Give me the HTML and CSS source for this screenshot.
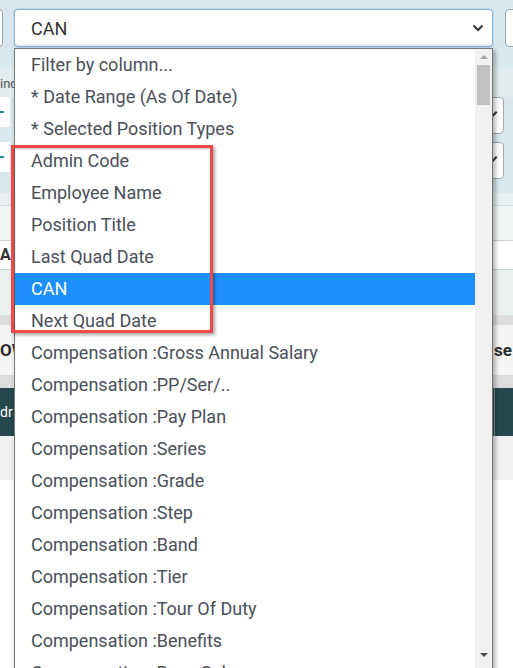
FILE: index.html
```html
<!DOCTYPE html>
<html>
<head>
<meta charset="utf-8">
<link rel="stylesheet" href="styles.css">
</head>
<body>
<div class="page">
  <div class="toolbar">
    <div class="tb-input tb-left"></div>
    <div class="select">
      <span class="select-value">CAN</span>
      <svg class="chev" width="12" height="8" viewBox="0 0 12 8"><path d="M1.5 1.5 L6 6 L10.5 1.5" fill="none" stroke="#333" stroke-width="2"/></svg>
    </div>
    <div class="tb-input tb-right"></div>
  </div>
  <div class="panel">
    <div class="panel-label">ind</div>
    <div class="panel-row">
      <div class="field"><span class="mark"></span></div>
      <div class="btn"><span class="pencil"></span></div>
    </div>
    <div class="panel-row">
      <div class="field"><span class="mark"></span></div>
      <div class="btn"><span class="pencil"></span></div>
    </div>
  </div>
  <div class="sep"></div>
  <div class="band-a"><div class="row-a">As</div></div>
  <div class="band-light"></div>
  <div class="band-grey"></div>
  <div class="band-title"><span class="title-l">OW</span><span class="title-r">se</span></div>
  <div class="band-grey2"></div>
  <div class="thead"><span class="th-l">dr</span><span class="th-div"></span></div>
  <div class="band-lightgrey"></div>
  <div class="band-white"></div>
</div>

<div class="dropdown">
  <div class="options">
    <div class="opt">Filter by column...</div>
    <div class="opt">* Date Range (As Of Date)</div>
    <div class="opt">* Selected Position Types</div>
    <div class="opt">Admin Code</div>
    <div class="opt">Employee Name</div>
    <div class="opt">Position Title</div>
    <div class="opt">Last Quad Date</div>
    <div class="opt active">CAN</div>
    <div class="opt">Next Quad Date</div>
    <div class="opt">Compensation :Gross Annual Salary</div>
    <div class="opt">Compensation :PP/Ser/..</div>
    <div class="opt">Compensation :Pay Plan</div>
    <div class="opt">Compensation :Series</div>
    <div class="opt">Compensation :Grade</div>
    <div class="opt">Compensation :Step</div>
    <div class="opt">Compensation :Band</div>
    <div class="opt">Compensation :Tier</div>
    <div class="opt">Compensation :Tour Of Duty</div>
    <div class="opt">Compensation :Benefits</div>
    <div class="opt">Compensation :Base Salary</div>
  </div>
  <div class="scrollbar">
    <div class="arrow-up"></div>
    <div class="thumb"></div>
    <div class="track"></div>
    <div class="arrow-down"></div>
  </div>
</div>

<div class="annot"></div>
</body>
</html>
```

FILE: styles.css
```css
html, body {
  margin: 0;
  padding: 0;
}
body {
  width: 513px;
  height: 668px;
  overflow: hidden;
  position: relative;
  font-family: Roboto, "Liberation Sans", sans-serif;
  background: #ffffff;
}
.page {
  display: flex;
  flex-direction: column;
}
.toolbar {
  height: 57px;
  background: #d7e7eb;
  display: flex;
  align-items: flex-start;
  padding-top: 9px;
  box-sizing: border-box;
  gap: 11px;
}
.tb-input {
  height: 38px;
  background: #fff;
  border: 1px solid #9aa5a8;
  border-radius: 4px;
  box-sizing: border-box;
  flex: none;
}
.tb-left {
  width: 20px;
  margin-left: -17px;
}
.tb-right {
  width: 40px;
  margin-left: 1px;
}
.select {
  width: 479px;
  height: 38px;
  box-sizing: border-box;
  background: #fff;
  border: 1px solid #8eb2d3;
  border-radius: 4px;
  box-shadow: 0 0 0 1px #b9d8f3, inset 0 -3px 3px -2px rgba(0,0,0,0.12);
  display: flex;
  align-items: center;
  padding: 0 8px 0 16px;
  flex: none;
}
.select-value {
  font-size: 18px;
  color: #333;
  flex: 1;
}
.chev {
  display: block;
}
.panel {
  background: #d9e8ec;
  height: 136px;
  display: flex;
  flex-direction: column;
  padding-top: 10px;
  box-sizing: border-box;
}
.panel-label {
  font-size: 13px;
  color: #555;
  height: 30px;
  line-height: 20px;
  padding-top: 7px;
  box-sizing: border-box;
  background: #e2ecee;
}
.panel-row {
  display: flex;
  justify-content: space-between;
  height: 45px;
  align-items: flex-start;
}
.field {
  width: 10px;
  height: 30px;
  background: #fff;
  display: flex;
  align-items: center;
}
.mark {
  display: block;
  width: 4px;
  height: 2px;
  background: #2a8a98;
}
.btn {
  width: 40px;
  height: 37px;
  margin-right: 9px;
  background: #fff;
  border: 1px solid #a0a8ab;
  border-radius: 4px;
  box-sizing: border-box;
  position: relative;
}
.pencil {
  position: absolute;
  left: 24px;
  top: 16px;
  width: 9px;
  height: 2px;
  background: #333;
  transform: rotate(-45deg);
}
.sep {
  height: 12px;
  background: #e7eff1;
  border-bottom: 1px solid #cfd9dc;
}
.band-a {
  height: 64px;
  background: #eef3f4;
  display: flex;
  align-items: flex-end;
}
.row-a {
  width: 100%;
  height: 30px;
  box-sizing: border-box;
  border-top: 1px solid #c9d2d4;
  border-bottom: 1px solid #c9d2d4;
  background: #fff;
  font-size: 16px;
  font-weight: bold;
  color: #333;
  line-height: 28px;
}
.band-light {
  height: 45px;
  background: #eaeff0;
}
.band-grey {
  height: 10px;
  background: #dddddd;
}
.band-grey2 {
  height: 13px;
  background: #dddddd;
}
.band-title {
  height: 50px;
  background: #f5f5f5;
  display: flex;
  justify-content: space-between;
  align-items: center;
  font-size: 17px;
  font-weight: bold;
  color: #2b2b2b;
}
.title-r {
  margin-right: 1px;
}
.thead {
  height: 48px;
  background: #25484c;
  color: #fff;
  font-size: 14px;
  display: flex;
  align-items: center;
  justify-content: space-between;
}
.th-div {
  width: 1px;
  height: 48px;
  background: #7f9a9c;
  margin-right: 18px;
}
.band-lightgrey {
  height: 44px;
  background: #f1f1f1;
}
.band-white {
  height: 200px;
  background: #fff;
}

.dropdown {
  position: absolute;
  left: 14px;
  top: 48px;
  width: 479px;
  height: 624px;
  box-sizing: border-box;
  border: 1px solid #777;
  background: #fff;
  box-shadow: 2px 2px 5px rgba(0,0,0,0.35);
  display: flex;
  overflow: hidden;
}
.options {
  flex: 1;
  overflow: hidden;
}
.opt {
  height: 32px;
  line-height: 32px;
  padding-left: 16px;
  font-size: 18px;
  color: #4a4f5a;
  white-space: nowrap;
}
.opt.active {
  background: #1e8fff;
  color: #fff;
}
.scrollbar {
  width: 17px;
  background: #f1f1f1;
  display: flex;
  flex-direction: column;
  align-items: center;
}
.arrow-up {
  width: 0;
  height: 0;
  margin-top: 6px;
  border-left: 4px solid transparent;
  border-right: 4px solid transparent;
  border-bottom: 4px solid #a3a3a3;
}
.thumb {
  width: 13px;
  height: 40px;
  margin-top: 6px;
  background: #c1c1c1;
}
.track {
  flex: 1;
}
.arrow-down {
  width: 0;
  height: 0;
  margin-bottom: 14px;
  border-left: 4px solid transparent;
  border-right: 4px solid transparent;
  border-top: 4px solid #505050;
}

.annot {
  position: absolute;
  left: 11px;
  top: 145px;
  width: 202px;
  height: 188px;
  box-sizing: border-box;
  border: 3px solid #f24848;
  box-shadow: 2px 2px 3px rgba(0,0,0,0.35), inset 1px 1px 2px rgba(0,0,0,0.25);
}
```
